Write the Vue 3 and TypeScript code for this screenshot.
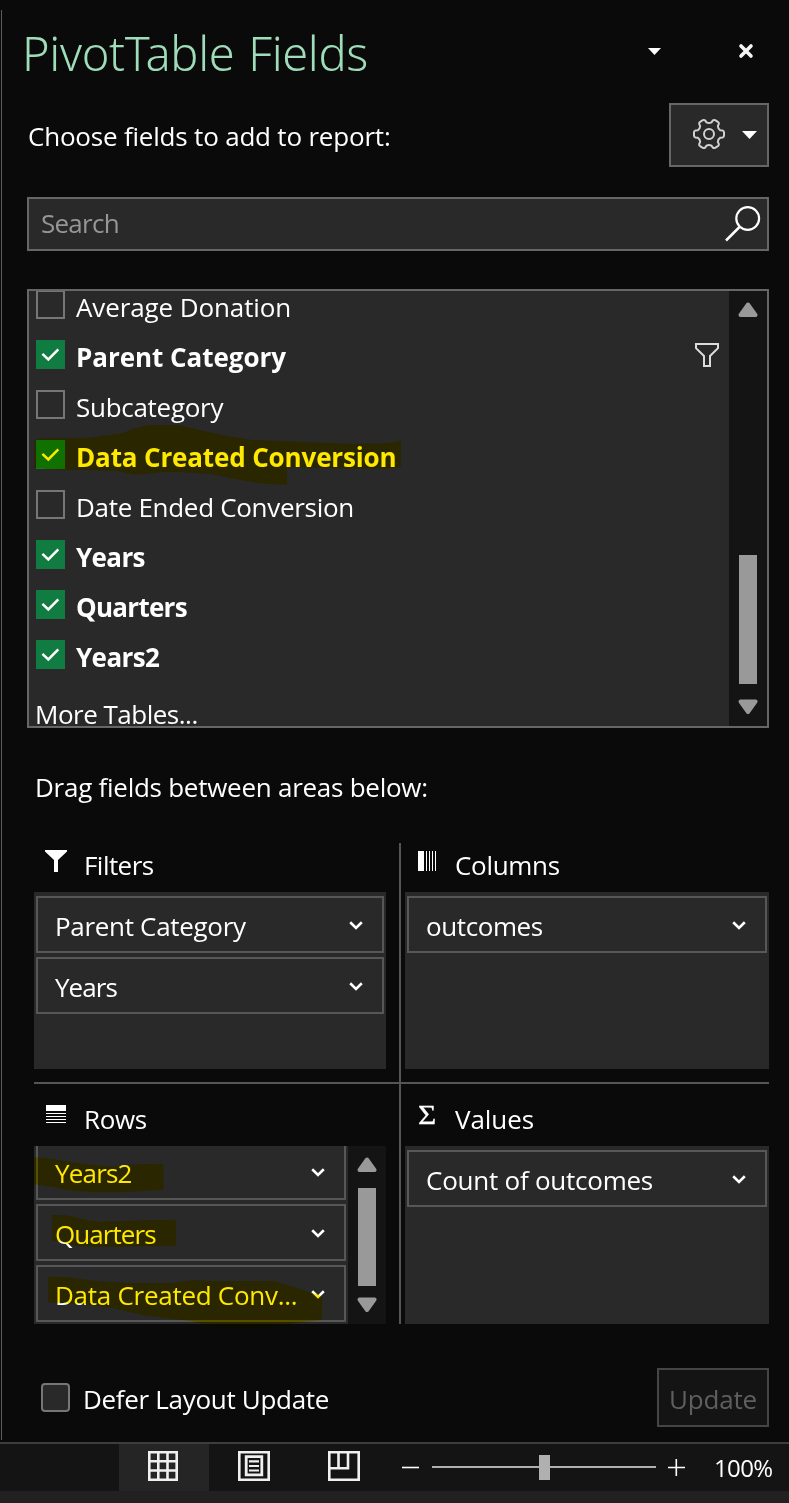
<script setup lang="ts">
interface Field { name: string; on: boolean; track: number; filtered?: boolean }
interface Chip { name: string; track: number }

const fields: Field[] = [
  { name: 'Average Donation', on: false, track: -0.11 },
  { name: 'Parent Category', on: true, track: -0.04, filtered: true },
  { name: 'Subcategory', on: false, track: -0.28 },
  { name: 'Data Created Conversion', on: true, track: -0.14 },
  { name: 'Date Ended Conversion', on: false, track: -0.3 },
  { name: 'Years', on: true, track: -0.62 },
  { name: 'Quarters', on: true, track: -0.72 },
  { name: 'Years2', on: true, track: -0.6 },
]

const filterChips: Chip[] = [
  { name: 'Parent Category', track: -0.31 },
  { name: 'Years', track: -0.95 },
]
const columnChips: Chip[] = [{ name: 'outcomes', track: -0.4 }]
const rowChips: Chip[] = [
  { name: 'Years2', track: -0.8 },
  { name: 'Quarters', track: -0.93 },
  { name: 'Data Created Conv...', track: -0.27 },
]
const valueChips: Chip[] = [{ name: 'Count of outcomes', track: -0.24 }]

const spacing = (track: number) => ({ letterSpacing: `${track}px` })

// Six-toothed gear outline centred on 17,17
function gearOutline(): string {
  const pt = (r: number, deg: number) => {
    const a = (deg * Math.PI) / 180
    return `${(17 + r * Math.cos(a)).toFixed(2)} ${(17 + r * Math.sin(a)).toFixed(2)}`
  }
  let d = ''
  for (let k = 0; k < 6; k++) {
    const c = k * 60
    d += `${k ? 'L' : 'M'}${pt(11.9, c - 18)}L${pt(14.2, c - 14)}Q${pt(15.3, c - 11)} ${pt(15.1, c - 6)}`
    d += `L${pt(15.1, c + 6)}Q${pt(15.3, c + 11)} ${pt(14.2, c + 14)}L${pt(11.9, c + 18)}`
    d += `Q${pt(10.3, c + 30)} ${pt(11.9, c + 42)}`
  }
  return d + 'Z'
}
const gear = gearOutline()
</script>

<template>
  <div class="window">
    <section class="pane">
      <header class="title-bar">
        <h1>PivotTable Fields</h1>
        <svg class="title-caret" width="13" height="7"><path d="M0 0H13L6.5 7Z" fill="#fff" /></svg>
        <svg width="16" height="16"><path d="M3 3L13 13M13 3L3 13" stroke="#f4f4f4" stroke-width="3.6" stroke-linecap="round" /></svg>
      </header>

      <div class="choose">
        <span class="choose-label">Choose fields to add to report:</span>
        <button class="tools">
          <svg width="34" height="34" fill="none" stroke="#d0d0d0" stroke-width="2" stroke-linejoin="round">
            <path :d="gear" /><circle cx="17" cy="17" r="5" />
          </svg>
          <svg class="tools-caret" width="15" height="8"><path d="M0 0H15L7.5 8Z" fill="#fff" /></svg>
        </button>
      </div>

      <div class="search">
        <span class="search-hint">Search</span>
        <svg width="36" height="36" fill="none" stroke="#fff" stroke-width="2.2">
          <circle cx="22.7" cy="12.5" r="11.4" /><path d="M14.5 21L1 34.5" stroke-width="2.5" />
        </svg>
      </div>

      <div class="list">
        <div class="list-body">
          <div v-for="f in fields" :key="f.name" class="field" :class="{ on: f.on }">
            <span class="box">
              <svg v-if="f.on" width="29" height="29"><path d="M6.4 13.9L12.3 19.4L22.3 9.3" fill="none" stroke="#fff" stroke-width="2.5" /></svg>
            </span>
            <span class="field-name" :style="spacing(f.track)">{{ f.name }}</span>
            <svg v-if="f.filtered" class="funnel" width="24" height="24">
              <path d="M1 1H23V5.2L15 13V23H9V13L1 5.2Z" fill="none" stroke="#dcdcdc" stroke-width="2" />
            </svg>
          </div>
          <div class="more">More Tables...</div>
        </div>
        <div class="track list-track">
          <svg width="20" height="16"><path d="M10 2.5L17.5 13H2.5Z" /></svg>
          <span class="thumb"></span>
          <svg width="20" height="16"><path d="M10 13L17.5 2.5H2.5Z" /></svg>
        </div>
        <svg class="marker list-marker" width="400" height="230" viewBox="0 0 1200 690">
          <path d="M43 488L48 479L65 475L210 473L305 460L330 450Q365 436 400 435L480 436L540 450L620 468L700 480L850 486L1000 491L1090 490L1143 483V562L1090 566L900 564L801 561V614L740 612L700 607L640 596L570 582L480 576L420 577L350 584L320 580L290 572L75 568L68 565H43Z" />
        </svg>
      </div>

      <div class="drag-label">Drag fields between areas below:</div>

      <div class="areas">
        <section class="area left">
          <h2>
            <svg class="glyph" width="22" height="22"><path d="M0 0H22V1.5L13 10V22H9V10L0 1.5Z" fill="#fff" /></svg>
            <span class="t-filters">Filters</span>
          </h2>
          <div class="drop">
            <div class="chips">
              <div v-for="c in filterChips" :key="c.name" class="chip">
                <span :style="spacing(c.track)">{{ c.name }}</span>
                <svg width="14" height="9"><path d="M1.2 1.3L7 7L12.8 1.3" /></svg>
              </div>
            </div>
          </div>
        </section>

        <section class="area right">
          <h2>
            <svg class="glyph" width="18" height="20" fill="#fff" shape-rendering="crispEdges">
              <path d="M0 0H6V20H0ZM8 0H9V20H8ZM11 0H12V20H11ZM14 0H15V20H14ZM17 0H18V20H17Z" />
            </svg>
            <span class="t-columns">Columns</span>
          </h2>
          <div class="drop">
            <div class="chips">
              <div v-for="c in columnChips" :key="c.name" class="chip">
                <span :style="spacing(c.track)">{{ c.name }}</span>
                <svg width="14" height="9"><path d="M1.2 1.3L7 7L12.8 1.3" /></svg>
              </div>
            </div>
          </div>
        </section>

        <section class="area left lower">
          <h2>
            <svg class="glyph rows-glyph" width="20" height="18" fill="#fff" shape-rendering="crispEdges">
              <path d="M0 0H20V6H0ZM0 8H20V9H0ZM0 11H20V12H0ZM0 14H20V15H0ZM0 17H20V18H0Z" />
            </svg>
            <span class="t-rows">Rows</span>
          </h2>
          <div class="drop">
            <div class="chips scrolled">
              <div v-for="c in rowChips" :key="c.name" class="chip">
                <span :style="spacing(c.track)">{{ c.name }}</span>
                <svg width="14" height="9"><path d="M1.2 1.3L7 7L12.8 1.3" /></svg>
              </div>
            </div>
            <div class="track rows-track">
              <svg width="20" height="16"><path d="M10 2.5L17.5 13H2.5Z" /></svg>
              <span class="thumb"></span>
              <svg width="20" height="16"><path d="M10 13L17.5 2.5H2.5Z" /></svg>
            </div>
          </div>
          <svg class="marker rows-marker" width="400" height="260" viewBox="0 0 1200 780">
            <path d="M42 247L100 252L180 265L270 275L350 268L430 266V345L380 347L310 352H220L140 345L100 336L42 328Z" />
            <path d="M96 420L140 421L200 435L240 440L360 436L468 434V513L350 514L240 517L165 512L143 506L120 499L96 497Z" />
            <path d="M84 605L140 607L230 618L320 624H450L520 615L600 619L760 618L830 638L906 664V735L840 742L760 756L700 760L600 757L510 738L380 722L270 698L200 688L84 682Z" />
          </svg>
        </section>

        <section class="area right lower">
          <h2>
            <span class="glyph sigma">Σ</span>
            <span class="t-values">Values</span>
          </h2>
          <div class="drop">
            <div class="chips">
              <div v-for="c in valueChips" :key="c.name" class="chip">
                <span :style="spacing(c.track)">{{ c.name }}</span>
                <svg width="14" height="9"><path d="M1.2 1.3L7 7L12.8 1.3" /></svg>
              </div>
            </div>
          </div>
        </section>
      </div>

      <footer class="defer">
        <span class="defer-box"></span>
        <span class="defer-label">Defer Layout Update</span>
        <button class="update">Update</button>
      </footer>
    </section>

    <div class="status">
      <div class="view active">
        <svg width="30" height="30" fill="none" stroke="#f0f0f0" stroke-width="2.6">
          <path d="M1.3 1.3H28.7V28.7H1.3ZM10.3 1V29M19.5 1V29M1 10.3H29M1 19.5H29" />
        </svg>
      </div>
      <div class="view">
        <svg width="32" height="30" fill="none" stroke="#f0f0f0">
          <path d="M1.3 1.3H30.7V28.7H1.3Z" stroke-width="2.6" />
          <path d="M8.2 5.7H23.8V23.8H8.2Z" stroke-width="2.8" />
          <path d="M11 10.3H21M11 15H21M11 19.5H21" stroke-width="2.2" />
        </svg>
      </div>
      <div class="view">
        <svg width="32" height="30" fill="none" stroke="#f0f0f0" stroke-width="2.6">
          <path d="M1.3 1.3H30.7V28.7H1.3ZM1 17.3H20V1M10.5 1V17" />
        </svg>
      </div>
      <div class="zoom">
        <svg width="17" height="17"><path d="M0 8.5H17" stroke="#fff" stroke-width="1.6" /></svg>
        <div class="slider"><span class="knob"></span></div>
        <svg width="17" height="17"><path d="M0 8.5H17M8.3 0V17" stroke="#fff" stroke-width="1.6" /></svg>
        <span class="percent">100%</span>
      </div>
    </div>
    <div class="edge"></div>
  </div>
</template>

<style>
body { margin: 0; background: #0a0a0a; }
</style>

<style scoped>
.window {
  width: 789px;
  height: 1503px;
  overflow: hidden;
  display: flex;
  flex-direction: column;
  background: #0a0a0a;
  color: #fff;
  font: 400 26px/36px "Open Sans", "Noto Sans", sans-serif;
  white-space: nowrap;
}
.window * { box-sizing: border-box; }
svg { display: block; flex: none; }
button { font: inherit; color: inherit; margin: 0; padding: 0; }

.pane {
  height: 1430px;
  margin: 10px 0 2px 1px;
  padding-right: 20px;
  border-left: 1px solid #5a5a5a;
  display: flex;
  flex-direction: column;
}
.title-bar {
  height: 93px;
  padding: 0 15px 11px 20px;
  display: flex;
  align-items: center;
}
.title-bar h1 {
  margin: 0;
  flex: 1;
  font: 300 47px/60px "Noto Sans", "Open Sans", sans-serif;
  letter-spacing: -0.35px;
  word-spacing: 2px;
  padding-top: 3px;
  color: #9fdcb9;
}
.title-caret { margin-right: 77px; }

.choose {
  height: 64px;
  padding-left: 26px;
  display: flex;
  justify-content: space-between;
  align-items: center;
}
.choose-label { letter-spacing: -0.2px; padding-top: 2px; }
.tools {
  width: 100px;
  height: 64px;
  border: 2px solid #666;
  background: #292929;
  display: flex;
  align-items: center;
  padding: 0 9px 2px 21px;
}
.tools-caret { margin: 2px 0 0 16px; }

.search {
  height: 54px;
  margin: 30px 0 0 25px;
  padding: 0 6px 0 12px;
  border: 2px solid #666;
  background: #292929;
  display: flex;
  justify-content: space-between;
  align-items: center;
}
.search-hint { color: #969696; letter-spacing: -0.75px; padding-bottom: 2px; }

.list {
  position: relative;
  height: 439px;
  margin: 38px 0 0 25px;
  border: 2px solid #666;
  background: #292929;
  display: flex;
}
.list-body { flex: 1; overflow: hidden; padding-left: 7px; }
.field { height: 50px; display: flex; align-items: center; }
.field:first-child { margin-top: -11px; }
.box { width: 29px; height: 29px; border: 2px solid #767676; margin-bottom: 2px; }
.on .box { border: 0; background: #107c41; }
.field-name { margin-left: 11px; padding-top: 4px; flex: 1; line-height: 28px; }
.on .field-name { font-weight: 700; }
.funnel { margin-right: 10px; }
.more { margin: 22px 0 0 -1px; letter-spacing: -0.5px; line-height: 24px; }

.track { width: 38px; background: #141414; display: flex; flex-direction: column; align-items: center; }
.track svg { fill: #999; stroke: #999; stroke-width: 4; stroke-linejoin: round; }
.thumb { width: 18px; background: #999; flex: none; }
.list-track { padding-top: 11px; }
.list-track .thumb { height: 129px; margin: 237px 0 15px; }
.rows-track { padding-top: 11px; }
.rows-track .thumb { height: 98px; margin: 15px 0 11px; }

.marker { position: absolute; mix-blend-mode: multiply; pointer-events: none; fill: #ffe900; }
.list-marker { left: -9px; top: -11px; }
.rows-marker { left: -14px; top: -9px; }

.drag-label { margin: 41px 0 0 33px; letter-spacing: -0.26px; }

.areas {
  height: 481px;
  margin: 38px 0 0 32px;
  display: grid;
  grid-template-columns: 367px 368px;
  grid-template-rows: 239px 242px;
}
.area { position: relative; display: flex; flex-direction: column; }
.left { border-right: 2px solid #555; padding-right: 13px; }
.right { padding-left: 4px; }
.lower { border-top: 2px solid #555; }
.left.lower { border-right: 0; padding-right: 15px; }
.left.lower::after { content: ""; position: absolute; right: 0; top: 0; bottom: 0; width: 2px; background: #555; }
.area h2 {
  margin: 0;
  flex: 0 0 49px;
  display: flex;
  align-items: flex-start;
  font: inherit;
}
.lower h2 { flex-basis: 62px; padding-top: 12px; }
.area h2 > span:last-child { padding-top: 4px; }
.lower h2 > span:last-child { padding-top: 5px; }
.glyph { margin: 7px 17px 0 11px; }
.right .glyph { margin: 8px 19px 0 13px; }
.left .rows-glyph { margin: 9px 18px 0 12px; }
.right .sigma {
  width: 18px;
  margin-top: 1px;
  font-family: "Liberation Serif", serif;
  font-size: 28px;
  -webkit-text-stroke: 0.3px #fff;
  transform: scaleX(1.12);
  transform-origin: 0 50%;
}
.t-filters { letter-spacing: -0.55px; }
.t-columns { letter-spacing: -0.3px; }
.t-rows { letter-spacing: -0.4px; }
.t-values { letter-spacing: -0.05px; }

.drop { flex: 0 0 177px; min-height: 0; background: #292929; display: flex; }
.lower .drop { height: 178px; flex: none; }
.chips { flex: 1; display: flex; flex-direction: column; gap: 4px; padding: 4px 2px; overflow: hidden; }
.scrolled { padding-top: 0; padding-bottom: 0; }
.scrolled .chip:first-child { margin-top: -3px; }
.chip {
  flex: 0 0 57px;
  border: 2px solid #575757;
  padding: 0 19px 0 17px;
  display: flex;
  justify-content: space-between;
  align-items: center;
}
.chip span { padding-top: 3px; }
.chip svg { fill: none; stroke: #fff; stroke-width: 2.6; margin-top: 2px; }

.defer {
  height: 59px;
  margin: 44px 0 0 39px;
  display: flex;
  align-items: center;
}
.defer-box { width: 29px; height: 29px; border: 2px solid #767676; border-radius: 4px; background: #292929; }
.defer-label { flex: 1; margin-left: 13px; padding-top: 2px; letter-spacing: -0.31px; }
.update {
  width: 112px;
  height: 59px;
  border: 2px solid #454545;
  background: #141414;
  color: #5f5f5f;
  letter-spacing: -0.2px;
  padding-top: 2px;
}

.status {
  height: 49px;
  border-top: 2px solid #3d3d3d;
  background: #141414;
  padding-left: 119px;
  display: flex;
}
.view { width: 90px; display: flex; justify-content: center; align-items: center; padding-bottom: 3px; }
.view.active { background: #252525; padding-right: 2px; }
.zoom { flex: 1; margin-left: 13px; display: flex; align-items: center; padding-bottom: 1px; }
.slider {
  width: 224px;
  height: 25px;
  margin: 0 12px 0 13px;
  display: flex;
  justify-content: center;
  background: linear-gradient(#b0b0b0, #b0b0b0) 0 11px / 100% 2px no-repeat;
}
.knob { width: 11px; background: #b0b0b0; }
.percent { margin-left: 29px; font-size: 24px; letter-spacing: -0.6px; padding-top: 1px; }
.edge { height: 12px; background: #212121; }
</style>
